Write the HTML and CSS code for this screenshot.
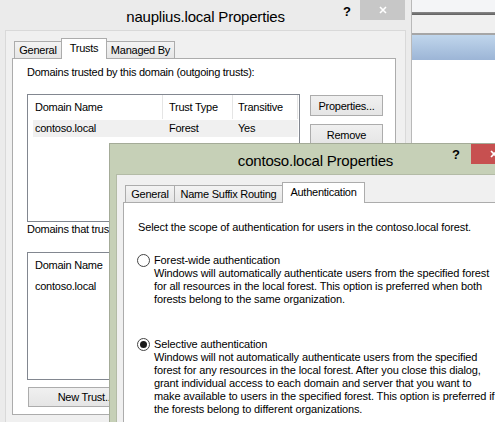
FILE: index.html
```html
<!DOCTYPE html>
<html>
<head>
<meta charset="utf-8">
<title>Properties</title>
<link rel="stylesheet" href="styles.css">
</head>
<body>
<div class="desktop">
  <div class="bgwin">
    <div class="bg-top"></div>
    <div class="bg-dark"></div>
    <div class="bg-mid"></div>
    <div class="bg-line"></div>
    <div class="bg-head"></div>
  </div>

  <div class="dlg back">
    <div class="titlebar">
      <span class="title">nauplius.local Properties</span>
      <span class="help">?</span>
      <span class="close"><svg width="8" height="8" viewBox="0 0 8 8"><path d="M1 1L7 7M7 1L1 7"/></svg></span>
    </div>
    <div class="client">
      <div class="tabs">
        <div class="tab w-gen">General</div>
        <div class="tab sel w-trusts">Trusts</div>
        <div class="tab w-managed">Managed By</div>
      </div>
      <div class="panel back-panel">
        <div class="line">Domains trusted by this domain (outgoing trusts):</div>
        <div class="listrow">
          <div class="list">
            <div class="lv-head"><div class="c1">Domain Name</div><div class="c2">Trust Type</div><div class="c3">Transitive</div></div>
            <div class="lv-row selected"><div class="c1">contoso.local</div><div class="c2">Forest</div><div class="c3">Yes</div></div>
          </div>
          <div class="btncol">
            <div class="btn">Properties...</div>
            <div class="btn">Remove</div>
          </div>
        </div>
        <div class="line clipped">Domains that trust this domain (incoming trusts):</div>
        <div class="listrow list2row">
          <div class="list">
            <div class="lv-head"><div class="c1">Domain Name</div><div class="c2"></div><div class="c3"></div></div>
            <div class="lv-row"><div class="c1">contoso.local</div><div class="c2"></div><div class="c3"></div></div>
          </div>
        </div>
        <div class="btn newtrust">New Trust...</div>
      </div>
    </div>
  </div>

  <div class="dlg front">
    <div class="titlebar">
      <span class="title">contoso.local Properties</span>
      <span class="help">?</span>
      <span class="close"><svg width="8" height="8" viewBox="0 0 8 8"><path d="M1 1L7 7M7 1L1 7"/></svg></span>
    </div>
    <div class="client">
      <div class="tabs">
        <div class="tab f-gen">General</div>
        <div class="tab f-nsr">Name Suffix Routing</div>
        <div class="tab sel f-auth">Authentication</div>
      </div>
      <div class="panel front-panel">
        <div class="mss">Select the scope of authentication for users in the contoso.local forest.</div>
        <div class="radio r1">
          <span class="rb"></span>
          <div class="mss">Forest-wide authentication<br>Windows will automatically authenticate users from the specified forest<br>for all resources in the local forest. This option is preferred when both<br>forests belong to the same organization.</div>
        </div>
        <div class="radio r2">
          <span class="rb on"></span>
          <div class="mss">Selective authentication<br>Windows will not automatically authenticate users from the specified<br>forest for any resources in the local forest. After you close this dialog,<br>grant individual access to each domain and server that you want to<br>make available to users in the specified forest. This option is preferred if<br>the forests belong to different organizations.</div>
        </div>
      </div>
    </div>
  </div>
</div>
</body>
</html>
```

FILE: styles.css
```css
* { box-sizing: border-box; margin: 0; padding: 0; }
html, body { width: 495px; height: 422px; overflow: hidden; }
body {
  font-family: "Liberation Sans", Arial, sans-serif;
  font-size: 11px;
  color: #000;
  background: #fff;
}
.desktop { position: relative; width: 495px; height: 422px; overflow: hidden; }

/* window in the background on the right */
.bgwin {
  position: absolute; left: 412px; top: 0; width: 83px; height: 422px;
  background: #fff; display: flex; flex-direction: column;
}
.bg-top { height: 12px; background: #f4f5f7; }
.bg-dark { height: 3px; background: linear-gradient(#8a8a8a, #5f5f5f); }
.bg-mid { height: 18px; background: #f0f0f0; }
.bg-line { height: 2px; background: #a6a6a6; }
.bg-head { height: 25px; background: linear-gradient(#c0d6ec, #9cb5d6); }

/* dialogs */
.dlg { position: absolute; }
.back {
  left: 0; top: 0; width: 412px; height: 470px;
  background: #ebebeb; border-right: 1px solid #b9b9b9;
  letter-spacing: -0.25px;
}
.front {
  left: 109px; top: 143px; width: 412px; height: 320px;
  background: #c6d0b7;
  border-top: 1px solid #a4ab98; border-left: 1px solid #a4ab98;
}

.titlebar {
  position: relative; height: 30px; padding-top: 2px;
  display: flex; justify-content: center; align-items: center;
}
.title { font-size: 15px; letter-spacing: -0.2px; white-space: nowrap; }
.help {
  position: absolute; top: 4px; font-weight: bold; font-size: 13px;
  line-height: 16px; letter-spacing: 0;
}
.back .help { left: 343px; }
.front .help { left: 342px; top: 3px; }
.close {
  position: absolute; top: 0; width: 45px; height: 20px;
  display: flex; align-items: center; justify-content: center;
  background: #c7c7c7;
}
.back .close { left: 360px; }
.front .close { left: 361px; background: #c75050; }
.close svg path { stroke: #fff; stroke-width: 1.6; fill: none; }

.client {
  margin-left: 5px; width: 401px; height: 440px;
  background: #f0f0f0; border: 1px solid #d9d9d9;
  padding: 7px 9px 0 6px;
}
.front .client { margin-left: 6px; border-color: #b3bba6; }

/* tabs */
.tabs { display: flex; align-items: flex-end; height: 20px; }
.tab {
  height: 17px; margin-left: -1px;
  border: 1px solid #acacac; border-bottom: 0;
  background: linear-gradient(#f3f3f3, #e6e6e6);
  display: flex; align-items: center; justify-content: center;
  white-space: nowrap; letter-spacing: -0.25px; flex: none;
}
.tab:first-child { margin-left: 2px; }
.tab.sel {
  height: 21px; margin-bottom: -1px; padding-bottom: 2px;
  background: #fff; position: relative; z-index: 1;
}
.w-gen { width: 48px; }
.w-trusts { width: 46px; }
.w-managed { width: 69px; }
.f-gen { width: 50px; }
.f-nsr { width: 109px; }
.f-auth { width: 83px; }

.panel { border: 1px solid #acacac; background: #fff; }
.back-panel { height: 357px; padding: 6px 14px 0; }
.front-panel { height: 300px; padding: 18px 14px 0; }

/* back panel content */
.line { height: 15px; line-height: 15px; white-space: nowrap; }
.line.clipped { width: 82px; overflow: hidden; }
.listrow { display: flex; gap: 10px; margin-top: 14px; }
.list2row { margin-top: 15px; }
.list {
  flex: none; width: 273px; height: 128px;
  border: 1px solid #828790; background: #fff;
}
.lv-head { display: flex; height: 24px; }
.lv-head > div { line-height: 24px; border-right: 1px solid #e5e5e5; white-space: nowrap; }
.lv-head .c1 { width: 135px; padding-left: 7px; }
.lv-head .c2 { width: 70px; padding-left: 6px; }
.lv-head .c3 { width: 65px; padding-left: 5px; }
.lv-row { display: flex; width: 265px; height: 17px; margin: 1px 0 0 5px; line-height: 17px; }
.lv-row.selected { background: #f0f0f0; }
.lv-row > div { white-space: nowrap; }
.lv-row .c1 { width: 130px; padding-left: 2px; }
.lv-row .c2 { width: 70px; padding-left: 6px; }
.lv-row .c3 { padding-left: 5px; }

.btncol { display: flex; flex-direction: column; gap: 8px; margin-top: 1px; }
.btn {
  width: 73px; height: 21px;
  border: 1px solid #acacac;
  background: linear-gradient(#f0f0f0, #e5e5e5);
  display: flex; align-items: center; justify-content: center;
  white-space: nowrap;
}
.newtrust { margin: 7px 0 0 1px; width: 115px; height: 20px; }

/* front panel content */
.mss { font-size: 11px; line-height: 13px; letter-spacing: -0.12px; white-space: nowrap; }
.radio { display: flex; align-items: flex-start; gap: 4px; margin-left: -1px; }
.r1 { margin-top: 20px; }
.r2 { margin-top: 32px; }
.rb {
  flex: none; width: 13px; height: 13px;
  border: 1px solid #444; border-radius: 50%; background: #fff;
  display: flex; align-items: center; justify-content: center;
}
.rb.on::after {
  content: ""; width: 7px; height: 7px; border-radius: 50%; background: #1a1a1a;
}
```
